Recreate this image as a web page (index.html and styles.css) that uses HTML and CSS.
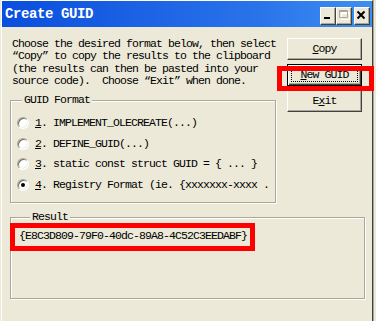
FILE: index.html
```html
<!DOCTYPE html>
<html>
<head>
    <title>Create GUID</title>
    <link rel="stylesheet" href="styles.css">
</head>
<body>

    <div class="window">
        <div class="titlebar">
            <span class="title">Create GUID</span>
            <div class="caption-buttons">
                <span class="cap-btn">
                    <svg width="14" height="16" viewBox="0 0 14 16"><rect x="3" y="9" width="6" height="2" fill="#000"/></svg>
                </span>
                <span class="cap-btn">
                    <svg width="14" height="16" viewBox="0 0 14 16">
                        <path d="M3.5 3.5h8v7h-8z M3 4.5h9" fill="none" stroke="#fff" stroke-width="1" transform="translate(1 1)"/>
                        <path d="M2.5 2.5h8v7h-8z M2 3.5h9" fill="none" stroke="#aca899" stroke-width="1"/>
                    </svg>
                </span>
                <span class="cap-btn close">
                    <svg width="14" height="16" viewBox="0 0 14 16"><path d="M2.5 3.5l7 7M9.5 3.5l-7 7" fill="none" stroke="#000" stroke-width="2"/></svg>
                </span>
            </div>
        </div>

        <div class="client">
            <div class="top">
                <div class="left">
                    <p class="intro">Choose the desired format below, then select
“Copy” to copy the results to the clipboard
(the results can then be pasted into your
source code).  Choose “Exit” when done.</p>

                    <fieldset class="group format">
                        <legend>GUID Format</legend>
                        <label class="option"><span class="radio"></span><span class="opt-text"><u>1</u>. IMPLEMENT_OLECREATE(...)</span></label>
                        <label class="option"><span class="radio"></span><span class="opt-text"><u>2</u>. DEFINE_GUID(...)</span></label>
                        <label class="option"><span class="radio"></span><span class="opt-text"><u>3</u>. static const struct GUID = { ... }</span></label>
                        <label class="option"><span class="radio checked"></span><span class="opt-text"><u>4</u>. Registry Format (ie. {xxxxxxx-xxxx .</span></label>
                    </fieldset>
                </div>

                <div class="buttons">
                    <button class="btn"><u>C</u>opy</button>
                    <button class="btn default"><u>N</u>ew GUID</button>
                    <button class="btn">E<u>x</u>it</button>
                </div>
            </div>

            <fieldset class="group result">
                <legend>Result</legend>
                <div class="guid">{E8C3D809-79F0-40dc-89A8-4C52C3EEDABF}</div>
            </fieldset>
        </div>
    </div>

    <!-- red markers drawn over the dialog -->
    <div class="mark mark-new"></div>
    <div class="mark mark-guid"></div>

</body>
</html>
```

FILE: styles.css
```css
body
{
    margin: 0;
    width: 376px;
    height: 321px;
    overflow: hidden;
    position: relative;
    background-color: #ece9d8;
    color: #000;
    font-family: "Liberation Mono", "Noto Sans CJK SC", monospace;
    font-size: 11.5px;
    letter-spacing: -0.9px;
    line-height: 12px;
}
.window
{
    margin-left: 1px;
    width: 370px;
    height: 320px;
    border-top: 1px solid #fff;
    border-left: 1px solid #fff;
    border-right: 1px solid #404040;
    box-shadow: 1px 0 0 #aca899;
}
.titlebar
{
    display: flex;
    align-items: flex-start;
    height: 26px;
    background: linear-gradient(to right, #0a4ede, #2a74ea 70%, #3d8ff2);
}
.title
{
    padding: 7px 0 0 3px;
    color: #fff;
    font-weight: bold;
    font-size: 14px;
    letter-spacing: -0.4px;
}
.caption-buttons
{
    display: flex;
    margin-left: auto;
    padding: 6px 2px 0 0;
}
.cap-btn
{
    display: block;
    width: 14px;
    height: 16px;
    border: 1px solid;
    border-color: #fff #404040 #404040 #fff;
    box-shadow: inset -1px -1px 0 #aca899;
    background-color: #ece9d8;
}
.cap-btn svg
{
    display: block;
}
.cap-btn.close
{
    margin-left: 2px;
}
.client
{
    padding: 11px 0 0 8px;
}
.top
{
    display: grid;
    grid-template-columns: 266px 75px;
    column-gap: 11px;
    align-items: start;
}
.intro
{
    margin: 0 0 0 2px;
    white-space: pre;
    line-height: 12.3px;
}
.group
{
    margin: 0;
    padding: 0;
    min-width: 0;
    border: 1px solid #aca899;
    box-shadow: inset 1px 1px 0 #fff, 1px 1px 0 #fff;
}
.group legend
{
    margin-left: 11px;
    padding: 0 2px;
    line-height: 12px;
    background-color: #ece9d8;
}
.format
{
    margin-top: 7px;
    padding: 6.5px 0 7px 0;
}
.option
{
    display: flex;
    align-items: center;
    height: 20.6px;
    padding-left: 6px;
    white-space: pre;
}
.radio
{
    display: flex;
    align-items: center;
    justify-content: center;
    box-sizing: border-box;
    width: 12px;
    height: 12px;
    margin-right: 6px;
    border-radius: 50%;
    border: 1px solid;
    border-color: #aca899 #fff #fff #aca899;
    box-shadow: inset 1px 1px 0 #716f64, inset -1px -1px 0 #f1efe2;
    background-color: #fff;
}
.radio.checked::after
{
    content: "";
    width: 4px;
    height: 4px;
    border-radius: 50%;
    background-color: #000;
}
.buttons
{
    display: flex;
    flex-direction: column;
    gap: 4px;
}
.btn
{
    height: 22px;
    padding: 0;
    font: inherit;
    letter-spacing: inherit;
    color: #000;
    background-color: #ece9d8;
    border: 1px solid;
    border-color: #fff #404040 #404040 #fff;
    box-shadow: inset -1px -1px 0 #aca899;
}
.btn.default
{
    border: 1px solid #000;
    box-shadow: inset 1px 1px 0 #fff, inset -1px -1px 0 #404040, inset -2px -2px 0 #aca899;
    outline: 1px dotted #000;
    outline-offset: -5px;
}
.result
{
    margin-top: 8px;
    box-sizing: border-box;
    width: 355px;
    height: 88px;
    padding: 7px 0 0 8px;
}
.guid
{
    white-space: pre;
}
.mark
{
    position: absolute;
    box-sizing: border-box;
    border: 5px solid #f00;
}
.mark-new
{
    left: 277px;
    top: 66px;
    width: 97px;
    height: 25px;
}
.mark-guid
{
    left: 10px;
    top: 223px;
    width: 245px;
    height: 28px;
}
```
